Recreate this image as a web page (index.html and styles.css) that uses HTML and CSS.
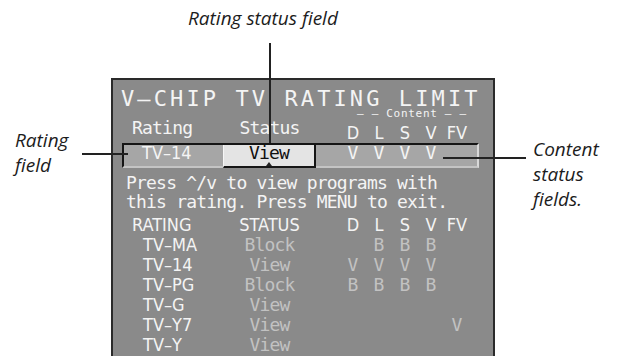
FILE: index.html
```html
<!DOCTYPE html>
<html lang="en">
<head>
  <meta charset="UTF-8">
  <title>V-Chip TV Rating Limit</title>
  <link rel="stylesheet" href="styles.css">
</head>
<body>
  <div class="page">
    <div class="screen">
      <div class="title">V–CHIP TV RATING LIMIT</div>
      <div class="content-label">– – Content – –</div>

      <div class="grid head">
        <span class="rating">Rating</span>
        <span class="status">Status</span>
        <span></span>
        <span class="flag">D</span>
        <span class="flag">L</span>
        <span class="flag">S</span>
        <span class="flag">V</span>
        <span class="flag">FV</span>
      </div>

      <!-- selected rating row -->
      <div class="sel">
        <div class="grid sel-grid">
          <span class="rating value">TV–14</span>
          <span class="status view-box">View<i class="caret"></i></span>
          <span></span>
          <span class="val">V</span>
          <span class="val">V</span>
          <span class="val">V</span>
          <span class="val">V</span>
          <span class="val"></span>
        </div>
      </div>

      <p class="help">Press ^/v to view programs with<br>this rating. Press MENU to exit.</p>

      <div class="table">
        <div class="grid trow thead">
          <span class="rating">RATING</span>
          <span class="status">STATUS</span>
          <span></span>
          <span class="flag">D</span>
          <span class="flag">L</span>
          <span class="flag">S</span>
          <span class="flag">V</span>
          <span class="flag">FV</span>
        </div>
        <div class="grid trow">
          <span class="rating value">TV–MA</span>
          <span class="status dim">Block</span>
          <span></span>
          <span class="val dim"></span>
          <span class="val dim">B</span>
          <span class="val dim">B</span>
          <span class="val dim">B</span>
          <span class="val dim"></span>
        </div>
        <div class="grid trow">
          <span class="rating value">TV–14</span>
          <span class="status dim">View</span>
          <span></span>
          <span class="val dim">V</span>
          <span class="val dim">V</span>
          <span class="val dim">V</span>
          <span class="val dim">V</span>
          <span class="val dim"></span>
        </div>
        <div class="grid trow">
          <span class="rating value">TV–PG</span>
          <span class="status dim">Block</span>
          <span></span>
          <span class="val dim">B</span>
          <span class="val dim">B</span>
          <span class="val dim">B</span>
          <span class="val dim">B</span>
          <span class="val dim"></span>
        </div>
        <div class="grid trow">
          <span class="rating value">TV–G</span>
          <span class="status dim">View</span>
        </div>
        <div class="grid trow">
          <span class="rating value">TV–Y7</span>
          <span class="status dim">View</span>
          <span></span>
          <span class="val dim"></span>
          <span class="val dim"></span>
          <span class="val dim"></span>
          <span class="val dim"></span>
          <span class="val dim">V</span>
        </div>
        <div class="grid trow">
          <span class="rating value">TV–Y</span>
          <span class="status dim">View</span>
        </div>
      </div>
    </div>

    <!-- callouts -->
    <div class="note note-top">Rating status field</div>
    <div class="note note-left">Rating<br>field</div>
    <div class="note note-right">Content<br>status<br>fields.</div>
    <div class="leader leader-top"></div>
    <div class="leader leader-left"></div>
    <div class="leader leader-right"></div>
  </div>
</body>
</html>
```

FILE: styles.css
```css
body {
  margin: 0;
  background: #fff;
}

.page {
  position: relative;
  width: 630px;
  height: 356px;
  overflow: hidden;
  box-sizing: border-box;
  padding: 78px 0 0 111px;
}

/* the on-screen menu */
.screen {
  width: 384px;
  height: 278px;
  box-sizing: border-box;
  background: #8a8a8a;
  border: 2px solid #2a2a2a;
  border-bottom: 0;
  padding-top: 8px;
  color: #f4f4f4;
  font-family: "DejaVu Sans Mono", monospace;
  overflow: hidden;
}

.title {
  font-size: 22px;
  line-height: 21px;
  letter-spacing: 3.1px;
  padding-left: 8px;
  white-space: nowrap;
}

.content-label {
  font-size: 11px;
  line-height: 10px;
  letter-spacing: 0.7px;
  margin-left: 244px;
  white-space: pre;
}

.grid {
  display: grid;
  grid-template-columns: 99px 93px 24px repeat(5, 26px);
  margin-left: 11px;
  font-size: 18px;
  white-space: nowrap;
}

.rating {
  padding-left: 8px;
  letter-spacing: -0.8px;
}

.rating.value {
  padding-left: 19px;
  letter-spacing: 0;
  font-family: "DejaVu Sans Condensed", "DejaVu Sans", sans-serif;
}

.status {
  text-align: center;
  letter-spacing: -0.8px;
}

.flag {
  text-align: center;
  font-family: "DejaVu Sans Condensed", "DejaVu Sans", sans-serif;
}

.val {
  text-align: center;
}

.dim {
  color: #c2c2c2;
}

.head {
  height: 24px;
  line-height: 18px;
}

.head .flag {
  padding-top: 5px;
}

/* highlighted row */
.sel {
  margin-left: 9px;
  width: 357px;
  height: 25px;
  box-sizing: border-box;
  background: #a6a6a6;
  border-top: 2px solid #151515;
  border-left: 2px solid #151515;
  border-right: 2px solid #d8d8d8;
  border-bottom: 2px solid #c4c4c4;
}

.sel-grid {
  margin-left: 0;
  height: 21px;
  line-height: 16px;
}

.sel-grid .rating.value {
  padding-left: 18px;
}

.view-box {
  position: relative;
  box-sizing: border-box;
  height: 23px;
  background: #e4e4e4;
  color: #111;
  border-left: 1px solid #f6f6f6;
  border-right: 2px solid #151515;
  border-bottom: 2px solid #151515;
}

.caret {
  position: absolute;
  left: 42px;
  bottom: 0;
  width: 0;
  height: 0;
  border-left: 3px solid transparent;
  border-right: 3px solid transparent;
  border-bottom: 4px solid #222;
}

.help {
  margin: 5px 0 0 13px;
  font-size: 18px;
  line-height: 19px;
  letter-spacing: -0.8px;
  white-space: nowrap;
}

.table {
  margin-top: 4px;
}

.trow {
  line-height: 20px;
}

.thead .rating,
.thead .status {
  font-family: "DejaVu Sans Condensed", "DejaVu Sans", sans-serif;
  letter-spacing: 0;
}

/* callout labels and lines */
.note {
  position: absolute;
  font-family: "Open Sans", "Noto Sans", sans-serif;
  font-style: italic;
  font-size: 19px;
  line-height: 25px;
  color: #1c1c1c;
  white-space: nowrap;
}

.note-top {
  left: 188px;
  top: 6px;
}

.note-left {
  left: 15px;
  top: 128px;
}

.note-right {
  left: 533px;
  top: 137px;
}

.leader {
  position: absolute;
  background: #222;
}

.leader-top {
  left: 269px;
  top: 43px;
  width: 2px;
  height: 100px;
}

.leader-left {
  left: 82px;
  top: 153px;
  width: 46px;
  height: 2px;
}

.leader-right {
  left: 443px;
  top: 157px;
  width: 83px;
  height: 2px;
}
```
